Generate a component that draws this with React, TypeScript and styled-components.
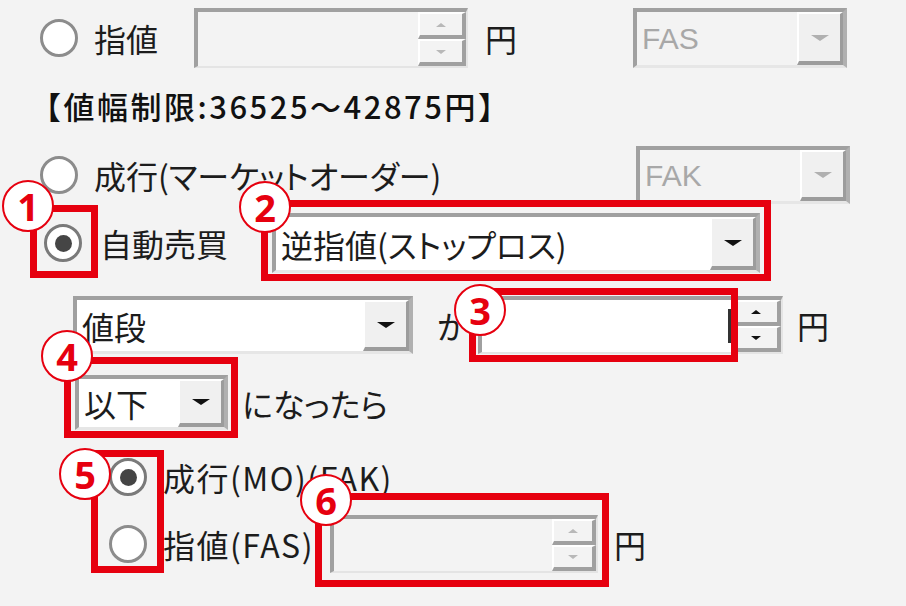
import styled, { createGlobalStyle } from 'styled-components';

const RED = '#e6000f';

const GlobalStyle = createGlobalStyle`
  html, body {
    margin: 0;
    padding: 0;
    background: #f3f3f3;
  }
  body {
    font-family: 'Noto Sans CJK JP', 'Noto Sans', sans-serif;
    color: #1c1c1c;
  }
`;

const callouts = [
  { n: 1, box: [30, 205, 68, 73], badge: [28, 206] },
  { n: 2, box: [261, 200, 510, 81], badge: [265, 207] },
  { n: 3, box: [469, 288, 269, 74], badge: [480, 310] },
  { n: 4, box: [64, 357, 174, 81], badge: [67, 356] },
  { n: 5, box: [91, 450, 73, 123], badge: [85, 474] },
  { n: 6, box: [315, 493, 294, 94], badge: [326, 500] },
];

export default function App() {
  return (
    <Page>
      <GlobalStyle />

      <Row $h={60} $mt={8} $pl={40}>
        <Radio />
        <Label $ml={16} $w={100}>指値</Label>
        <SpinBox w={274} h={60} btnW={48} disabled />
        <Label $ml={17}>円</Label>
        <Combo w={214} h={60} ml={116} value='FAS' disabled />
      </Row>

      <Row $h={74} $mt={0} $pl={40}>
        <Notice>【値幅制限:36525～42875円】</Notice>
      </Row>

      <Row $h={58} $mt={4} $pl={40}>
        <Radio />
        <Label $ml={16} $w={542}>成行(マーケットオーダー)</Label>
        <Combo w={214} h={58} value='FAK' disabled />
      </Row>

      <Row $h={60} $mt={9} $pl={44}>
        <Radio checked />
        <Label $ml={18} $w={172}>自動売買</Label>
        <Combo w={488} h={60} value='逆指値(ストップロス)' />
      </Row>

      <Row $h={58} $mt={23} $pl={73}>
        <Combo w={340} h={58} value='値段' />
        <Label $ml={24} $w={41}>が</Label>
        <SpinBox w={305} h={58} btnW={48} caret />
        <Label $ml={14}>円</Label>
      </Row>

      <Row $h={55} $mt={21} $pl={75}>
        <Combo w={153} h={55} value='以下' />
        <Label $ml={14}>になったら</Label>
      </Row>

      <Row $h={44} $mt={25} $pl={109}>
        <Radio checked />
        <Label $ml={16} $ls={1.5}>成行(MO)(FAK)</Label>
      </Row>

      <Row $h={58} $mt={16} $pl={109}>
        <Radio />
        <Label $ml={16} $w={167} $ls={1.5}>指値(FAS)</Label>
        <SpinBox w={268} h={58} btnW={44} disabled />
        <Label $ml={16}>円</Label>
      </Row>

      {callouts.map((c) => (
        <div key={c.n}>
          <CalloutBox style={{ left: c.box[0], top: c.box[1], width: c.box[2], height: c.box[3] }} />
          <Badge style={{ left: c.badge[0] - 26, top: c.badge[1] - 26 }}>{c.n}</Badge>
        </div>
      ))}
    </Page>
  );
}

function Radio({ checked }: { checked?: boolean }) {
  return (
    <RadioCircle $checked={checked}>
      {checked && <RadioDot />}
    </RadioCircle>
  );
}

function SpinBox({
  w,
  h,
  btnW,
  disabled,
  caret,
}: {
  w: number;
  h: number;
  btnW: number;
  disabled?: boolean;
  caret?: boolean;
}) {
  return (
    <SpinFrame $w={w} $h={h} $disabled={disabled}>
      <SpinField>{caret && <Caret />}</SpinField>
      <SpinButtons $w={btnW}>
        <SpinButton>
          <Tri $dir='up' $size={5} $color={disabled ? '#b8b8b8' : '#111'} />
        </SpinButton>
        <SpinButton>
          <Tri $dir='down' $size={5} $color={disabled ? '#b8b8b8' : '#111'} />
        </SpinButton>
      </SpinButtons>
    </SpinFrame>
  );
}

function Combo({
  w,
  h,
  ml = 0,
  value,
  disabled,
}: {
  w: number;
  h: number;
  ml?: number;
  value: string;
  disabled?: boolean;
}) {
  return (
    <ComboFrame $w={w} $h={h} $ml={ml} $disabled={disabled}>
      <ComboText $disabled={disabled}>{value}</ComboText>
      <ComboButton>
        <Tri $dir='down' $size={9} $color={disabled ? '#b0b0b0' : '#111'} />
      </ComboButton>
    </ComboFrame>
  );
}

const Page = styled.div`
  position: relative;
  width: 906px;
  height: 606px;
  overflow: hidden;
  background: #f3f3f3;
  display: flex;
  flex-direction: column;
`;

const Row = styled.div<{ $h: number; $mt: number; $pl: number }>`
  display: flex;
  align-items: center;
  flex: none;
  height: ${(p) => p.$h}px;
  margin-top: ${(p) => p.$mt}px;
  padding-left: ${(p) => p.$pl}px;
`;

const Label = styled.span<{ $ml?: number; $w?: number; $ls?: number }>`
  flex: none;
  margin-left: ${(p) => p.$ml || 0}px;
  width: ${(p) => (p.$w ? `${p.$w}px` : 'auto')};
  font-size: 32px;
  line-height: 1;
  letter-spacing: ${(p) => p.$ls || 0}px;
  white-space: nowrap;
  font-feature-settings: 'palt';
  color: #1c1c1c;
`;

const Notice = styled.span`
  margin-left: -10px;
  font-size: 31px;
  line-height: 1;
  font-weight: 500;
  letter-spacing: 2.5px;
  white-space: nowrap;
  color: #111;
`;

const RadioCircle = styled.span<{ $checked?: boolean }>`
  flex: none;
  box-sizing: border-box;
  width: 38px;
  height: 38px;
  border-radius: 50%;
  border: 3px solid ${(p) => (p.$checked ? '#7a7a7a' : '#8c8c8c')};
  background: #fff;
  display: flex;
  align-items: center;
  justify-content: center;
`;

const RadioDot = styled.span`
  width: 17px;
  height: 17px;
  border-radius: 50%;
  background: #454545;
`;

const SpinFrame = styled.div<{ $w: number; $h: number; $disabled?: boolean }>`
  flex: none;
  box-sizing: border-box;
  width: ${(p) => p.$w}px;
  height: ${(p) => p.$h}px;
  display: flex;
  border-top: 4px solid #a0a0a0;
  border-left: 4px solid #a0a0a0;
  border-right: 2px solid #e4e4e4;
  border-bottom: 2px solid #e4e4e4;
  background: ${(p) => (p.$disabled ? '#f3f3f3' : '#fff')};
`;

const SpinField = styled.div`
  flex: 1;
  display: flex;
  justify-content: flex-end;
  align-items: center;
  padding-right: 2px;
`;

const Caret = styled.span`
  width: 3px;
  height: 34px;
  background: #333;
`;

const SpinButtons = styled.div<{ $w: number }>`
  flex: none;
  width: ${(p) => p.$w}px;
  display: flex;
  flex-direction: column;
`;

const SpinButton = styled.div`
  flex: 1;
  box-sizing: border-box;
  background: #f3f3f3;
  border-top: 2px solid #fff;
  border-left: 2px solid #fff;
  border-right: 4px solid #a0a0a0;
  border-bottom: 4px solid #a0a0a0;
  display: flex;
  align-items: center;
  justify-content: center;
`;

const Tri = styled.span<{ $dir: 'up' | 'down'; $size: number; $color: string }>`
  width: 0;
  height: 0;
  border-left: ${(p) => p.$size}px solid transparent;
  border-right: ${(p) => p.$size}px solid transparent;
  ${(p) =>
    p.$dir === 'up'
      ? `border-bottom: ${Math.round(p.$size * 0.7)}px solid ${p.$color};`
      : `border-top: ${Math.round(p.$size * 0.7)}px solid ${p.$color};`}
`;

const ComboFrame = styled.div<{ $w: number; $h: number; $ml: number; $disabled?: boolean }>`
  flex: none;
  box-sizing: border-box;
  width: ${(p) => p.$w}px;
  height: ${(p) => p.$h}px;
  margin-left: ${(p) => p.$ml}px;
  display: flex;
  border-top: 4px solid #a0a0a0;
  border-left: 4px solid #a0a0a0;
  border-right: 4px solid #b0b0b0;
  border-bottom: 3px solid #e6e6e6;
  background: ${(p) => (p.$disabled ? '#f3f3f3' : '#fff')};
`;

const ComboText = styled.span<{ $disabled?: boolean }>`
  flex: 1;
  display: flex;
  align-items: center;
  padding-left: 5px;
  font-size: ${(p) => (p.$disabled ? 30 : 32)}px;
  font-family: ${(p) => (p.$disabled ? "'Liberation Sans', sans-serif" : "'Noto Sans CJK JP', sans-serif")};
  font-feature-settings: 'palt';
  color: ${(p) => (p.$disabled ? '#a8a8a8' : '#1c1c1c')};
  white-space: nowrap;
  overflow: hidden;
`;

const ComboButton = styled.div`
  flex: none;
  width: 46px;
  box-sizing: border-box;
  background: #f0f0f0;
  border-top: 2px solid #fff;
  border-left: 2px solid #fff;
  border-right: 3px solid #9c9c9c;
  border-bottom: 4px solid #9c9c9c;
  display: flex;
  align-items: center;
  justify-content: center;
`;

const CalloutBox = styled.div`
  position: absolute;
  box-sizing: border-box;
  border: 7px solid ${RED};
  pointer-events: none;
`;

const Badge = styled.div`
  position: absolute;
  box-sizing: border-box;
  width: 52px;
  height: 52px;
  border-radius: 50%;
  border: 2px solid ${RED};
  background: #fff;
  color: ${RED};
  font-family: 'Noto Sans', 'Liberation Sans', sans-serif;
  font-weight: 700;
  font-size: 38px;
  line-height: 1;
  display: flex;
  align-items: center;
  justify-content: center;
`;
